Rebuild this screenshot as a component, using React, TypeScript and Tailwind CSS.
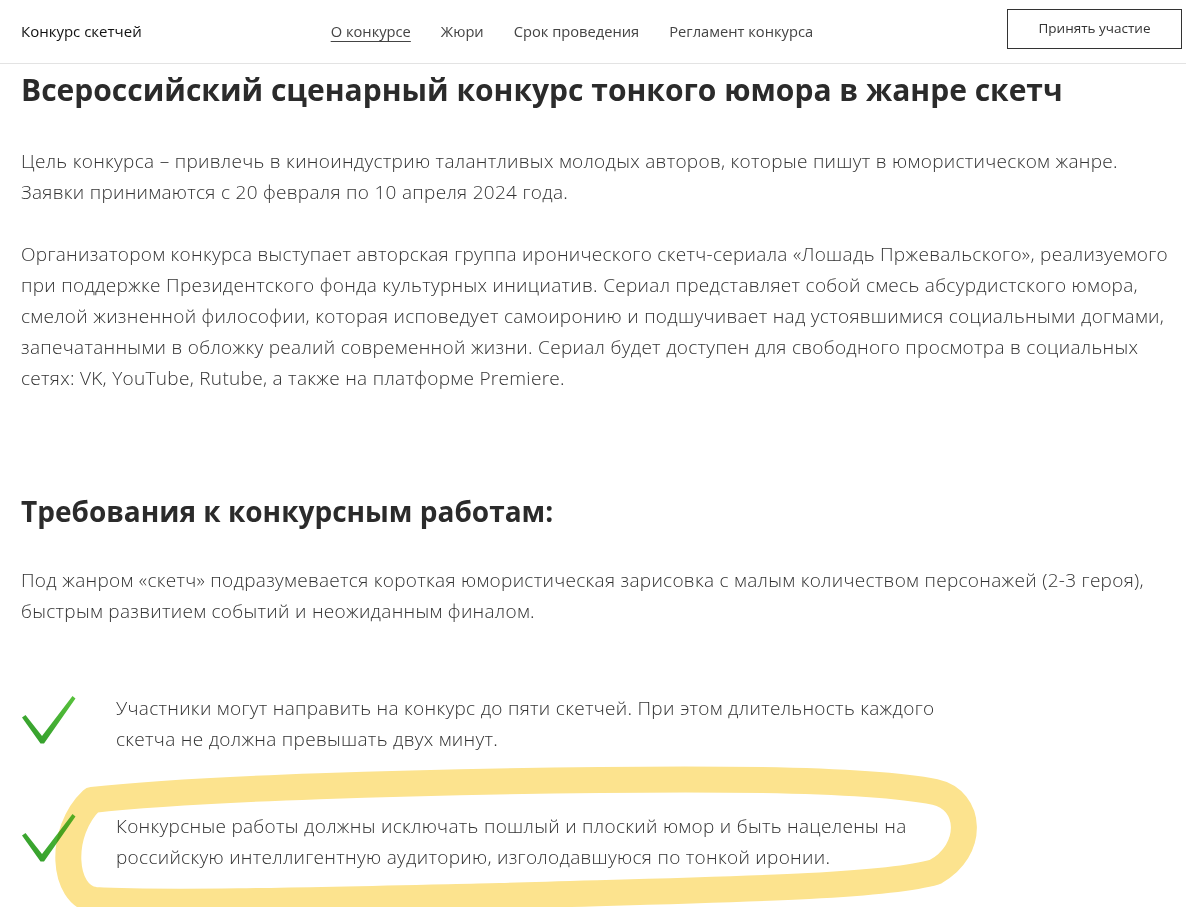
import React from 'react'

const NAV = ['О конкурсе', 'Жюри', 'Срок проведения', 'Регламент конкурса']

function Check() {
  return (
    <svg width="56" height="50" viewBox="0 0 56 50" className="shrink-0">
      <defs>
        <linearGradient id="chk" x1="0" y1="1" x2="1" y2="0">
          <stop offset="0" stopColor="#2f9a2a" />
          <stop offset="1" stopColor="#58c23c" />
        </linearGradient>
      </defs>
      <path d="M1 21.5 L4.5 19 L21 40 L51.5 0 L54.5 2.5 L23 47.5 L19.5 47.5 Z" fill="url(#chk)" />
    </svg>
  )
}

function Item({ children }: { children: React.ReactNode }) {
  return (
    <div className="flex">
      <div className="w-[95px] pt-[3px]">
        <Check />
      </div>
      <p className="whitespace-nowrap">{children}</p>
    </div>
  )
}

export default function App() {
  return (
    <div
      className="relative min-h-screen overflow-hidden bg-white text-[#333]"
      style={{ fontFamily: '"Open Sans", "Noto Sans", sans-serif' }}
    >
      <header className="flex h-[64px] items-center border-b border-[#e3e3e3] pl-[21px] pr-[4px]">
        <div className="text-[15px] font-medium text-[#111]">Конкурс скетчей</div>
        <nav className="ml-[189px] flex gap-[30px] text-[14.7px] text-[#444]">
          {NAV.map((n, i) => (
            <a key={n} className={i === 0 ? 'underline underline-offset-4' : ''}>
              {n}
            </a>
          ))}
        </nav>
        <button className="ml-auto mb-[6px] h-[40px] w-[175px] border border-[#333] text-[13.5px] text-[#333]">
          Принять участие
        </button>
      </header>

      <main className="pl-[21px] text-[19px] font-light leading-[31px] tracking-[0.3px]">
        <h1 className="mt-[6px] text-[30px] font-bold leading-[40px] tracking-normal text-[#2b2b2b]">
          Всероссийский сценарный конкурс тонкого юмора в жанре скетч
        </h1>

        <p className="mt-[36px] whitespace-nowrap">
          Цель конкурса – привлечь в киноиндустрию талантливых молодых авторов, которые пишут в юмористическом жанре.
          <br />
          Заявки принимаются с 20 февраля по 10 апреля 2024 года.
        </p>

        <p className="mt-[31px] whitespace-nowrap">
          Организатором конкурса выступает авторская группа иронического скетч-сериала «Лошадь Пржевальского», реализуемого
          <br />
          при поддержке Президентского фонда культурных инициатив. Сериал представляет собой смесь абсурдистского юмора,
          <br />
          смелой жизненной философии, которая исповедует самоиронию и подшучивает над устоявшимися социальными догмами,
          <br />
          запечатанными в обложку реалий современной жизни. Сериал будет доступен для свободного просмотра в социальных
          <br />
          сетях: VK, YouTube, Rutube, а также на платформе Premiere.
        </p>

        <h2 className="mt-[98px] text-[28px] font-bold leading-[38px] tracking-normal text-[#2b2b2b]">
          Требования к конкурсным работам:
        </h2>

        <p className="mt-[35px] whitespace-nowrap">
          Под жанром «скетч» подразумевается короткая юмористическая зарисовка с малым количеством персонажей (2-3 героя),
          <br />
          быстрым развитием событий и неожиданным финалом.
        </p>

        <div className="mt-[66px] flex flex-col gap-[56px]">
          <Item>
            Участники могут направить на конкурс до пяти скетчей. При этом длительность каждого
            <br />
            скетча не должна превышать двух минут.
          </Item>
          <Item>
            Конкурсные работы должны исключать пошлый и плоский юмор и быть нацелены на
            <br />
            российскую интеллигентную аудиторию, изголодавшуюся по тонкой иронии.
          </Item>
        </div>
        <div className="h-[60px]" />
      </main>

      <svg
        className="pointer-events-none absolute left-0 top-0 mix-blend-multiply"
        width="1186"
        height="960"
        viewBox="0 0 1186 960"
      >
        <path
          d="M92 800 C 200 788, 420 782, 600 780 C 760 778, 880 781, 935 792 C 972 800, 975 850, 935 872 C 880 888, 700 890, 500 896 C 320 900, 170 904, 95 900 C 62 896, 58 832, 92 800 Z"
          fill="none"
          stroke="#fce38e"
          strokeWidth="26"
          strokeLinejoin="round"
        />
      </svg>
    </div>
  )
}
